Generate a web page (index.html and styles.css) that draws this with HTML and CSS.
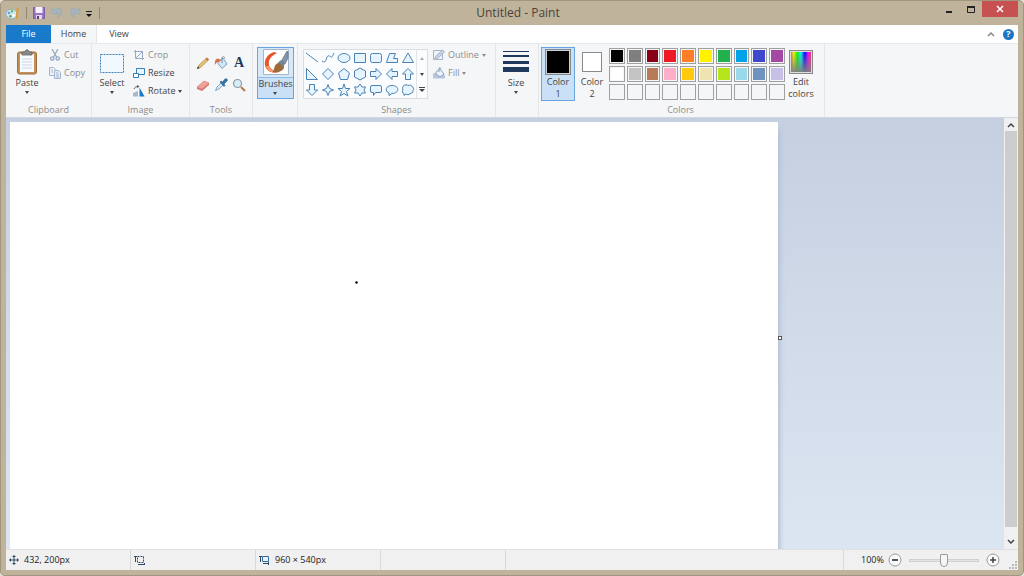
FILE: index.html
```html
<!DOCTYPE html>
<html lang="en">
<head>
<meta charset="utf-8">
<title>Untitled - Paint</title>
<link rel="stylesheet" href="styles.css">
</head>
<body>
<div class="window">
  <header class="titlebar">
    <div class="quick-access">
      <svg class="app-icon" width="14" height="14" viewBox="0 0 14 14"><ellipse cx="5.5" cy="8" rx="5.5" ry="4.8" fill="#d4e8f3" stroke="#7ba4bb" stroke-width=".7"/><circle cx="3" cy="7" r="1.3" fill="#54a8d8"/><circle cx="6" cy="5.2" r="1.3" fill="#69b55b"/><circle cx="4.5" cy="10.3" r="1.3" fill="#61a24b"/><circle cx="7.5" cy="9.5" r="1.2" fill="#fff"/><path d="M10 13V6l1-5 2 1-1 5v6z" fill="#e39a3b"/></svg>
      <span class="qa-sep"></span>
      <button class="qa-button" aria-label="Save"><svg width="12" height="12" viewBox="0 0 12 12"><path d="M.5.5h11v11h-11z" fill="#9a72c4" stroke="#7f5ca8"/><path d="M2.500 0h7v6h-7z" fill="#f5f2fa"/><path d="M3 8h6v4H3z" fill="#e1d9ee"/><path d="M4 9h2v3H4z" fill="#594176"/></svg></button>
      <button class="qa-button" aria-label="Undo" disabled><svg width="12" height="12" viewBox="0 0 12 12"><path d="M1 1v6h6L5 5c3-1 4 2 1.500 6C12 9 12 1 6.500 1.500L3.500 3z" fill="#a5b4be" stroke="#98a9b3" stroke-width=".6"/></svg></button>
      <button class="qa-button" aria-label="Redo" disabled><svg width="12" height="12" viewBox="0 0 12 12"><path d="M11 1v6H5l2-2C4 4 3 7 5.500 11 0 9 0 1 5.500 1.500L8.500 3z" fill="#a5b4be" stroke="#98a9b3" stroke-width=".6"/></svg></button>
      <button class="qa-button qa-more" aria-label="Customize Quick Access Toolbar"><svg width="8" height="8" viewBox="0 0 8 8"><path d="M1 2.500h6" stroke="#222"/><path d="M1 5h6L4 8z" fill="#111"/></svg></button>
      <span class="qa-sep"></span>
    </div>
    <h1 class="title">Untitled - Paint</h1>
    <div class="window-controls">
      <button aria-label="Minimize"><svg width="8" height="10" viewBox="0 0 8 10"><path d="M1 8h6" stroke="#222" stroke-width="2"/></svg></button>
      <button aria-label="Maximize"><svg width="10" height="10" viewBox="0 0 10 10"><path d="M1.500 2.500h7v6h-7z" fill="none" stroke="#222"/><path d="M1 3h8" stroke="#222" stroke-width="2"/></svg></button>
      <button class="close" aria-label="Close"><svg width="8" height="8" viewBox="0 0 8 8"><path d="M1 1l6 6M7 1L1 7" stroke="#fff" stroke-width="1.500"/></svg></button>
    </div>
  </header>

  <nav class="tabs">
    <button class="tab file">File</button>
    <button class="tab active">Home</button>
    <button class="tab">View</button>
    <div class="tabs-end">
      <button aria-label="Minimize the Ribbon"><svg width="8" height="6" viewBox="0 0 8 6"><path d="M1 5l3-3 3 3" fill="none" stroke="#888" stroke-width="1.500"/></svg></button>
      <button class="help" aria-label="Help">?</button>
    </div>
  </nav>

  <main class="ribbon">
    <section class="group clipboard">
      <div class="tools-row">
        <button class="big">
          <svg width="22" height="26" viewBox="0 0 22 26"><rect x="1.500" y="3" width="19" height="22" rx="2" fill="#c39254" stroke="#9c7242"/><path d="M4 5h14v18H4z" fill="#f7faff"/><path d="M6 10h10M6 13h10M6 16h10M6 19h10" stroke="#c8d5e6"/><path d="M6 6V3h3c0-3 4-3 4 0h3v3z" fill="#8a8a8a" stroke="#666" stroke-width=".8"/></svg>
          <span>Paste</span><i class="caret"></i>
        </button>
        <div class="small-list">
          <button class="small" disabled><svg width="12" height="12" viewBox="0 0 12 12"><path d="M3 0l4.500 8M9 0L4.500 8" stroke="#9daac0" stroke-width="1.300"/><circle cx="3.300" cy="9.500" r="1.700" fill="none" stroke="#8fa3c8" stroke-width="1.200"/><circle cx="8.700" cy="9.500" r="1.700" fill="none" stroke="#8fa3c8" stroke-width="1.200"/></svg>Cut</button>
          <button class="small" disabled><svg width="12" height="12" viewBox="0 0 12 12"><path d="M.5.5h4l2 2v6h-6z" fill="#edf1f8" stroke="#a6b5cf"/><path d="M5.500 3.500h4l2 2v6h-6z" fill="#e5ecf6" stroke="#a6b5cf"/><path d="M2 3h2M2 5h2M7 6h2M7 8h3M7 10h3" stroke="#a6b5cf"/></svg>Copy</button>
        </div>
      </div>
      <h2>Clipboard</h2>
    </section>

    <section class="group image">
      <div class="tools-row">
        <button class="big">
          <svg width="26" height="26" viewBox="0 0 26 26"><path d="M1.500 5.500h23v18h-23z" fill="#f2f8ff" stroke="#397fb9" stroke-dasharray="2 1"/></svg>
          <span>Select</span><i class="caret"></i>
        </button>
        <div class="small-list">
          <button class="small" disabled><svg width="12" height="12" viewBox="0 0 12 12"><path d="M2.500 1v8.500H11M1 2.500h8.500V11M3 9l7-7" fill="none" stroke="#9baac4"/></svg>Crop</button>
          <button class="small"><svg width="12" height="12" viewBox="0 0 12 12"><path d="M3.500 1.500h8v6h-8z" fill="#eaf5ff" stroke="#347eb9"/><path d="M.5 6.500h5v4h-5z" fill="#fff" stroke="#347eb9"/></svg>Resize</button>
          <button class="small"><svg width="12" height="12" viewBox="0 0 12 12"><path d="M0 11.500V8l5-2v5.500z" fill="#a8b7ca"/><path d="M6.500 11.500v-9l5 9z" fill="#1979c8"/><path d="M1 4c1-2 2-2.500 4-2.500" fill="none" stroke="#555"/><path d="M4 0l2.500 1.500L4 3z" fill="#555"/></svg>Rotate <i class="caret"></i></button>
        </div>
      </div>
      <h2>Image</h2>
    </section>

    <section class="group tools">
      <div class="tool-grid">
        <button aria-label="Pencil"><svg width="14" height="14" viewBox="0 0 14 14"><path d="M1.500 12.500l1-3L10.500 2 12.500 4 4.500 11.500z" fill="#e8c06a" stroke="#9b824e" stroke-width=".6"/><path d="M9.500 3l1.500-1.500L13 3.500 11.500 5z" fill="#c8765b"/><path d="M1 13l1-2.500L3.500 12z" fill="#333"/></svg></button>
        <button aria-label="Fill with color"><svg width="14" height="14" viewBox="0 0 14 14"><path d="M4.500 5.500L9 2l4 6-5 4.500-4-5z" fill="#d3e7f8" stroke="#5f8fb8" stroke-width=".8"/><path d="M8 7V2c0-2 3-1.500 3 .5" fill="none" stroke="#63798e" stroke-width=".8"/><path d="M7 4C2 1 .5 4 1 9c1-2 1.500-3 4-3z" fill="#e07048"/></svg></button>
        <button class="text-tool" aria-label="Text">A</button>
        <button aria-label="Eraser"><svg width="14" height="14" viewBox="0 0 14 14"><path d="M1 9l7-6 5 2-7 6z" fill="#f3a097" stroke="#cb776f" stroke-width=".6"/><path d="M1 9l5 2 7-6v2l-7 6-5-2z" fill="#d57870"/></svg></button>
        <button aria-label="Color picker"><svg width="14" height="14" viewBox="0 0 14 14"><path d="M1.500 12.500L3 9l4-4 2 2-4 4z" fill="#d4e9fb" stroke="#7394b0" stroke-width=".8"/><path d="M6 4l1-1 1.500 1L11 1c2-1 3 1 2 2l-3 3 1 1.500-1 1z" fill="#2f76ad" stroke="#2a5c8a" stroke-width=".6"/></svg></button>
        <button aria-label="Magnifier"><svg width="14" height="14" viewBox="0 0 14 14"><circle cx="5.500" cy="5.500" r="4" fill="#d9edf8" stroke="#8d9ba7" stroke-width="1.200"/><path d="M9 9l4 4" stroke="#b77b43" stroke-width="2"/></svg></button>
      </div>
      <h2>Tools</h2>
    </section>

    <section class="group brushes">
      <button class="brush-button">
        <span class="brush-top"><svg width="26" height="26" viewBox="0 0 26 26"><path d="M.5.5h25v25H.5z" fill="#fff" stroke="#a5b6c7"/><path d="M11 3C4 5 1 11 2 16c1 6 7 9 14 7-5-1-9-3-10-7-1-5 2-9 8-12z" fill="#e6532a"/><path d="M3 17c2 7 9 8 14 5-5 0-10-1-11-5z" fill="#f39b69"/><path d="M9 23c3-1 1-7 6-9 3-1 6 1 6 4 0 4-6 6-12 5z" fill="#9b6b3c"/><path d="M15 14c1-2 3-3 4-3l3 4-2 3c-1-2-3-4-5-4z" fill="#70879e"/><path d="M19 11l5-9 1 1v6l-3 6z" fill="#8496a8" stroke="#5b6c80" stroke-width=".7"/></svg></span>
        <span class="brush-bottom">Brushes<i class="caret"></i></span>
      </button>
    </section>

    <section class="group shapes">
      <div class="tools-row">
        <div class="gallery">
          <div class="shape-grid">
            <button aria-label="Line"><svg viewBox="0 0 16 16"><path d="M2 3l12 9"/></svg></button>
            <button aria-label="Curve"><svg viewBox="0 0 16 16"><path d="M2 11c4 3 4-2 5-4s3-1 4 0 2-2 3-4" fill="none"/></svg></button>
            <button aria-label="Oval"><svg viewBox="0 0 16 16"><ellipse cx="8" cy="8" rx="6" ry="4.500"/></svg></button>
            <button aria-label="Rectangle"><svg viewBox="0 0 16 16"><path d="M2.500 3.500h11v9h-11z"/></svg></button>
            <button aria-label="Rounded rectangle"><svg viewBox="0 0 16 16"><rect x="2.500" y="3.500" width="11" height="9" rx="2"/></svg></button>
            <button aria-label="Polygon"><svg viewBox="0 0 16 16"><path d="M2.500 12.500l3-9h6L9.500 8.500h4v4z"/></svg></button>
            <button aria-label="Triangle"><svg viewBox="0 0 16 16"><path d="M8 3l5.500 9.500h-11z"/></svg></button>
            <button aria-label="Right triangle"><svg viewBox="0 0 16 16"><path d="M2.500 2.500v11h11z"/></svg></button>
            <button aria-label="Diamond"><svg viewBox="0 0 16 16"><path d="M8 2.500L13.500 8 8 13.500 2.500 8z"/></svg></button>
            <button aria-label="Pentagon"><svg viewBox="0 0 16 16"><path d="M8 2.500l5.500 4.500-2 6.500h-7L2.500 7z"/></svg></button>
            <button aria-label="Hexagon"><svg viewBox="0 0 16 16"><path d="M8 2l5.500 3v6L8 14l-5.500-3V5z"/></svg></button>
            <button aria-label="Right arrow"><svg viewBox="0 0 16 16"><path d="M2.500 5.500H8v-3L13.500 8 8 13.500v-3H2.500z"/></svg></button>
            <button aria-label="Left arrow"><svg viewBox="0 0 16 16"><path d="M13.500 5.500H8v-3L2.500 8 8 13.500v-3h5.500z"/></svg></button>
            <button aria-label="Up arrow"><svg viewBox="0 0 16 16"><path d="M5.500 13.500V8h-3L8 2.500 13.500 8h-3v5.500z"/></svg></button>
            <button aria-label="Down arrow"><svg viewBox="0 0 16 16"><path d="M5.500 2.500V8h-3L8 13.500 13.500 8h-3V2.500z"/></svg></button>
            <button aria-label="Four-point star"><svg viewBox="0 0 16 16"><path d="M8 2.500l1.500 4L13.500 8l-4 1.500-1.500 4-1.500-4-4-1.500 4-1.500z"/></svg></button>
            <button aria-label="Five-point star"><svg viewBox="0 0 16 16"><path d="M8 2l1.500 4.500h4.500l-3.500 3 1.300 4.500L8 11.500 4.200 14l1.300-4.500L2 6.500h4.500z"/></svg></button>
            <button aria-label="Six-point star"><svg viewBox="0 0 16 16"><path d="M8 2l2 3h3.500L12 8l1.500 3H10l-2 3-2-3H2.500L4 8 2.500 5H6z"/></svg></button>
            <button aria-label="Rounded callout"><svg viewBox="0 0 16 16"><path d="M4 3.500h8q1.500 0 1.500 1.500v4q0 1.500-1.500 1.500H7.500L5.500 13.500v-3H4q-1.500 0-1.500-1.500V5q0-1.500 1.500-1.500z"/></svg></button>
            <button aria-label="Oval callout"><svg viewBox="0 0 16 16"><path d="M5 11c-5-2-3-7.500 3-7.500 8 0 7.500 8 0 8l-3 2z"/></svg></button>
            <button aria-label="Cloud callout"><svg viewBox="0 0 16 16"><path d="M4 3.500c1.500-1 3-1 4 0 2-1 4 0 4 1 2 1 2 3 1 4 0 2-1 3-3 3-1 1.500-3 1.500-4 .5L4 13.500v-2c-2-.5-2-2.500-1-3.500-1-2-.5-3.500 1-4.500z"/></svg></button>
          </div>
          <div class="gallery-scroll">
            <button aria-label="Scroll up" disabled><i class="caret up"></i></button>
            <button aria-label="Scroll down"><i class="caret"></i></button>
            <button aria-label="More shapes"><svg width="6" height="6" viewBox="0 0 6 6"><path d="M0 .5h6" stroke="#444"/><path d="M0 2h6L3 5z" fill="#444"/></svg></button>
          </div>
        </div>
        <div class="small-list">
          <button class="small" disabled><svg width="12" height="12" viewBox="0 0 12 12"><path d="M.5 1.500h9v9h-9z" fill="#f0f3f8" stroke="#a5b4ca"/><path d="M1.500 10.500l1-3 7-6.500 2 2-7 6.500z" fill="#c9d2e0" stroke="#9aa8bd" stroke-width=".8"/></svg>Outline <i class="caret"></i></button>
          <button class="small" disabled><svg width="12" height="12" viewBox="0 0 12 12"><path d="M0 6v5.500h12V8z" fill="#b7c6dd"/><path d="M3 5l4-3 4 5-4 3-4-3z" fill="#edf2fa" stroke="#8fa1bd"/><path d="M6 5V1c1-1 2 0 2 1" fill="none" stroke="#8fa1bd"/></svg>Fill <i class="caret"></i></button>
        </div>
      </div>
      <h2>Shapes</h2>
    </section>

    <section class="group size">
      <button class="big">
        <svg width="26" height="26" viewBox="0 0 26 26"><path d="M0 2.500h26" stroke="#1e395b"/><path d="M0 7h26" stroke="#1e395b" stroke-width="2"/><path d="M0 13.500h26" stroke="#1e395b" stroke-width="3"/><path d="M0 20.500h26" stroke="#1e395b" stroke-width="5"/></svg>
        <span>Size</span><i class="caret"></i>
      </button>
    </section>

    <section class="group colors">
      <div class="tools-row">
        <button class="color-slot selected"><span class="swatch primary"></span><span>Color</span><span>1</span></button>
        <button class="color-slot"><span class="swatch secondary"></span><span>Color</span><span>2</span></button>
        <div class="palette">
          <button class="c-black" aria-label="Black"></button><button class="c-gray" aria-label="Gray-50%"></button><button class="c-darkred" aria-label="Dark red"></button><button class="c-red" aria-label="Red"></button><button class="c-orange" aria-label="Orange"></button><button class="c-yellow" aria-label="Yellow"></button><button class="c-green" aria-label="Green"></button><button class="c-turquoise" aria-label="Turquoise"></button><button class="c-indigo" aria-label="Indigo"></button><button class="c-purple" aria-label="Purple"></button>
          <button class="c-white" aria-label="White"></button><button class="c-lightgray" aria-label="Gray-25%"></button><button class="c-brown" aria-label="Brown"></button><button class="c-rose" aria-label="Rose"></button><button class="c-gold" aria-label="Gold"></button><button class="c-cream" aria-label="Light yellow"></button><button class="c-lime" aria-label="Lime"></button><button class="c-aqua" aria-label="Light turquoise"></button><button class="c-bluegray" aria-label="Blue-gray"></button><button class="c-lavender" aria-label="Lavender"></button>
          <button aria-label="Custom 1"></button><button aria-label="Custom 2"></button><button aria-label="Custom 3"></button><button aria-label="Custom 4"></button><button aria-label="Custom 5"></button><button aria-label="Custom 6"></button><button aria-label="Custom 7"></button><button aria-label="Custom 8"></button><button aria-label="Custom 9"></button><button aria-label="Custom 10"></button>
        </div>
        <button class="edit-colors"><span class="spectrum"></span><span>Edit</span><span>colors</span></button>
      </div>
      <h2>Colors</h2>
    </section>
  </main>

  <div class="workspace">
    <div class="viewport">
      <div class="canvas">
        <svg class="drawing" viewBox="0 0 768 432"><circle cx="346.500" cy="160.500" r="1.200" fill="#000"/></svg>
        <span class="handle"></span>
      </div>
    </div>
    <div class="scrollbar">
      <button aria-label="Scroll canvas up"><svg width="8" height="6" viewBox="0 0 8 6"><path d="M1 5l3-3 3 3" fill="none" stroke="#444" stroke-width="1.500"/></svg></button>
      <div class="thumb"></div>
      <button class="down" aria-label="Scroll canvas down"><svg width="8" height="6" viewBox="0 0 8 6"><path d="M1 1l3 3 3-3" fill="none" stroke="#444" stroke-width="1.500"/></svg></button>
    </div>
  </div>

  <footer class="status">
    <div class="cell"><svg width="10" height="10" viewBox="0 0 10 10"><path d="M5 1v8M1 5h8" stroke="#2f4868"/><path d="M5 0l2 2H3zM5 10l2-2H3zM0 5l2-2v4zM10 5L8 3v4z" fill="#2f4868"/></svg>432, 200px</div>
    <div class="cell"><svg width="11" height="10" viewBox="0 0 11 10"><path d="M3.500 1.500h6v6h-6z" fill="none" stroke="#2f4868" stroke-dasharray="2 1"/><path d="M1.500 1v6M0 1.500h3M4 9.500h6M10.500 8v2" stroke="#2f4868"/></svg></div>
    <div class="cell"><svg width="11" height="10" viewBox="0 0 11 10"><path d="M3.500 1.500h6v5h-6z" fill="#e7f3ff" stroke="#356b9b"/><path d="M1.500 1v6M0 1.500h3M4 8.500h6M9.500 7v3" stroke="#2f4868"/></svg>960 × 540px</div>
    <div class="cell"></div>
    <div class="cell wide"></div>
    <div class="zoom">
      <label for="zoom">100%</label>
      <button aria-label="Zoom out"><svg width="14" height="14" viewBox="0 0 14 14"><circle cx="7" cy="7" r="6" fill="#fafafa" stroke="#999"/><path d="M4 7h6" stroke="#555" stroke-width="2"/></svg></button>
      <input id="zoom" type="range" min="0" max="100" value="50">
      <button aria-label="Zoom in"><svg width="14" height="14" viewBox="0 0 14 14"><circle cx="7" cy="7" r="6" fill="#fafafa" stroke="#999"/><path d="M4 7h6M7 4v6" stroke="#444" stroke-width="1.500"/></svg></button>
      <svg class="grip" width="8" height="8" viewBox="0 0 8 8"><path d="M6 0h2v2H6zM3 3h2v2H3zM6 3h2v2H6zM0 6h2v2H0zM3 6h2v2H3zM6 6h2v2H6z" fill="#bbb"/></svg>
    </div>
  </footer>
</div>
</body>
</html>
```
FILE: styles.css
```css
* { box-sizing: border-box; }
body { margin: 0; background: #e4dfd6; font: 9px/12px "Open Sans", "Noto Sans", sans-serif; color: #444; }
button { margin: 0; padding: 0; border: 0; background: none; font: inherit; color: inherit; display: flex; align-items: center; justify-content: center; }
svg { display: block; flex: none; }
h1, h2 { margin: 0; font: inherit; }

.window { height: 100vh; display: flex; flex-direction: column; padding: 0 5px 5px; background: #bfb39b; border: 1px solid #a0957f; border-radius: 5px; overflow: hidden; }

.titlebar { flex: none; height: 24px; display: grid; grid-template-columns: 1fr auto 1fr; }
.quick-access { display: flex; align-items: center; gap: 6px; }
.qa-sep { width: 1px; height: 12px; background: #91887a; }
.qa-button { height: 14px; }
.qa-more { margin-left: -2px; }
.title { align-self: center; padding-left: 12px; font-size: 12px; line-height: 16px; color: #4a443a; }
.window-controls { display: flex; justify-content: flex-end; height: 16px; }
.window-controls button { width: 22px; }
.window-controls .close { width: 36px; background: #c75050; }

.tabs { flex: none; height: 18px; display: flex; background: #fff; }
.tab { width: 44px; }
.tab.file { width: 45px; background: #1979ca; color: #fff; }
.tab.active { width: 46px; background: #f5f6f7; border-right: 1px solid #e3e5e7; }
.tabs-end { margin-left: auto; padding-right: 4px; display: flex; align-items: center; gap: 8px; }
.help { width: 11px; height: 11px; border-radius: 50%; background: #1b75c4; color: #fff; font-weight: bold; }

.ribbon { flex: none; height: 75px; display: flex; background: #f5f6f7; border-top: 1px solid #e6e8ea; border-bottom: 1px solid #d0d7e2; }
.group { flex: none; display: flex; flex-direction: column; padding: 3px 4px 0; border-right: 1px solid #e4e6e8; }
.group h2 { margin-top: auto; padding-bottom: 1px; text-align: center; color: #8c8c8c; }
.clipboard { width: 86px; }
.image { width: 98px; }
.tools { width: 63px; }
.brushes { width: 45px; }
.shapes { width: 198px; }
.size { width: 43px; padding-left: 3px; }
.colors { width: 286px; padding-left: 2px; }
.tools-row { display: flex; align-items: flex-start; }
.big { width: 34px; flex-direction: column; gap: 2px; padding-top: 2px; }
.image .big { width: 32px; }
.small-list { display: flex; flex-direction: column; margin: -1px 0 0 5px; }
.small { height: 18px; justify-content: flex-start; gap: 3px; white-space: nowrap; }
.small:disabled { color: #8b8d91; }
.caret { width: 0; height: 0; border: 2px solid transparent; border-top: 3px solid currentColor; border-bottom: 0; }
.caret.up { border-top: 0; border-bottom: 3px solid #aaa; }

.tool-grid { display: grid; grid-template-columns: repeat(3, 1fr); grid-auto-rows: 22px; padding-top: 5px; }
.text-tool { font: bold 14px/16px "Liberation Serif", serif; color: #1e395b; }

.brush-button { width: 37px; height: 52px; flex-direction: column; justify-content: flex-start; border: 1px solid #69a4df; background: #c9e0f7; }
.brush-top { width: 100%; padding: 1px 0 2px; display: flex; justify-content: center; border-bottom: 1px solid #8fbbe8; background: #d7e8f9; }
.brush-bottom { display: flex; flex-direction: column; align-items: center; gap: 2px; }

.gallery { display: flex; margin-top: 2px; margin-left: 1px; border: 1px solid #dadde1; background: #fbfcfd; }
.shape-grid { display: grid; grid-template-columns: repeat(7, 16px); grid-auto-rows: 16px; }
.shape-grid svg { width: 16px; height: 16px; fill: #e6f4ff; stroke: #4a83b3; stroke-width: 1; }
.gallery-scroll { width: 11px; display: grid; grid-template-rows: repeat(3, 16px); border-left: 1px solid #e1e4e8; }

.color-slot { width: 34px; height: 54px; flex-direction: column; justify-content: flex-start; border: 1px solid transparent; }
.color-slot.selected { border-color: #69a4df; background: #c9e0f7; }
.swatch { width: 26px; height: 26px; margin: 1px 0; border: 1px solid #888; box-shadow: inset 0 0 0 1px #c8d0d8; }
.swatch.primary { background: #000; }
.swatch.secondary { width: 20px; height: 20px; margin: 4px 0; background: #fff; box-shadow: none; }
.palette { width: 176px; margin-top: 1px; display: grid; grid-template-columns: repeat(10, 1fr); grid-auto-rows: 16px; gap: 2px; }
.palette button { border: 1px solid #a0a0a0; box-shadow: inset 0 0 0 1px #f5f6f7; }
.edit-colors { width: 32px; flex-direction: column; }
.spectrum { width: 24px; height: 24px; margin: 3px 0 2px; border: 1px solid #888; box-shadow: inset 0 0 0 1px #ddd; background: linear-gradient(transparent, #808080), linear-gradient(90deg, #f33, #ff0, #0f0, #0ff, #00f, #f0f, #f33); }
.c-black { background: #000; } .c-gray { background: #7f7f7f; } .c-darkred { background: #880015; } .c-red { background: #ed1c24; } .c-orange { background: #ff7f27; }
.c-yellow { background: #fff200; } .c-green { background: #22b14c; } .c-turquoise { background: #00a2e8; } .c-indigo { background: #3f48cc; } .c-purple { background: #a349a4; }
.c-white { background: #fff; } .c-lightgray { background: #c3c3c3; } .c-brown { background: #b97a57; } .c-rose { background: #ffaec9; } .c-gold { background: #ffc90e; }
.c-cream { background: #efe4b0; } .c-lime { background: #b5e61d; } .c-aqua { background: #99d9ea; } .c-bluegray { background: #7092be; } .c-lavender { background: #c8bfe7; }

.workspace { flex: 1; min-height: 0; display: flex; background: linear-gradient(#c5cfe0, #dce6f2); }
.viewport { flex: 1; min-width: 0; overflow: hidden; padding: 4px 4px 0; }
.canvas { position: relative; width: 768px; height: 432px; background: #fff; box-shadow: 4px 7px 5px -2px #b3c0d7; }
.drawing { width: 100%; }
.handle { position: absolute; right: -4px; top: 50%; width: 4px; height: 4px; margin-top: -2px; border: 1px solid #555; background: #fff; }
.scrollbar { width: 14px; padding: 0 1px; display: flex; flex-direction: column; background: #f0f0f0; }
.scrollbar button { height: 13px; }
.scrollbar .down { height: 22px; padding-top: 8px; }
.thumb { flex: 1; background: #cdcdcd; }

.status { flex: none; height: 21px; display: flex; background: #f0f0f0; border-top: 1px solid #e1e1e1; color: #222; }
.cell { width: 125px; display: flex; align-items: center; gap: 5px; padding-left: 3px; border-right: 1px solid #d7d7d7; }
.cell.wide { flex: 1; }
.zoom { position: relative; width: 174px; display: flex; align-items: center; gap: 4px; padding-left: 17px; }
.zoom input { appearance: none; width: 70px; height: 14px; margin: 0 3px; background: none; }
.zoom input::-webkit-slider-runnable-track { height: 3px; border: 1px solid #d0d0d0; background: #e4e4e4; }
.zoom input::-webkit-slider-thumb { appearance: none; width: 8px; height: 13px; margin-top: -6px; border: 1px solid #999; border-radius: 1px 1px 4px 4px; background: #f5f5f5; }
.grip { position: absolute; right: 1px; bottom: 1px; }
```
